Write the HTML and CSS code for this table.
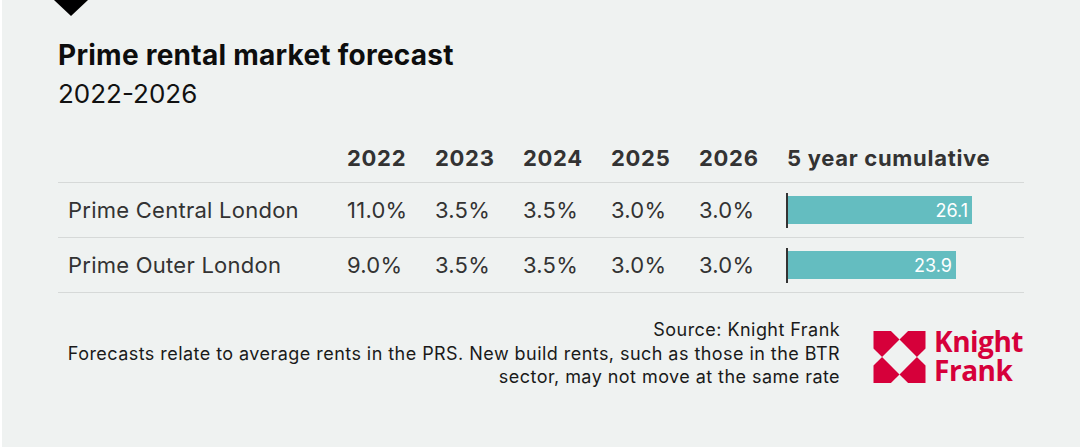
FILE: index.html
```html
<!DOCTYPE html>
<html lang="en">
<head>
<meta charset="utf-8">
<title>Prime rental market forecast</title>
<link rel="stylesheet" href="styles.css">
</head>
<body>
<div class="page">
  <div class="marker"></div>
  <h1 class="title">Prime rental market forecast</h1>
  <div class="subtitle">2022-2026</div>

  <div class="table">
    <div class="row head">
      <div class="cell label"></div>
      <div class="cell">2022</div>
      <div class="cell">2023</div>
      <div class="cell">2024</div>
      <div class="cell">2025</div>
      <div class="cell">2026</div>
      <div class="cell">5 year cumulative</div>
    </div>
    <div class="row">
      <div class="cell label">Prime Central London</div>
      <div class="cell">11.0%</div>
      <div class="cell">3.5%</div>
      <div class="cell">3.5%</div>
      <div class="cell">3.0%</div>
      <div class="cell">3.0%</div>
      <div class="cell barcell"><div class="bar" style="width:184px"><span>26.1</span></div></div>
    </div>
    <div class="row">
      <div class="cell label">Prime Outer London</div>
      <div class="cell">9.0%</div>
      <div class="cell">3.5%</div>
      <div class="cell">3.5%</div>
      <div class="cell">3.0%</div>
      <div class="cell">3.0%</div>
      <div class="cell barcell"><div class="bar" style="width:168px"><span>23.9</span></div></div>
    </div>
  </div>

  <div class="footer">
    <p class="note">Source: Knight Frank<br>Forecasts relate to average rents in the PRS. New build rents, such as those in the BTR<br>sector, may not move at the same rate</p>
    <div class="logo">
      <svg class="logo-mark" viewBox="0 0 100 100" width="53" height="52" aria-hidden="true">
        <polygon points="0,0 33.5,0 50,16.5 16.5,50 0,33.5" />
        <polygon points="66.5,0 100,0 100,33.5 83.5,50 50,16.5" />
        <polygon points="100,66.5 100,100 66.5,100 50,83.5 83.5,50" />
        <polygon points="0,66.5 16.5,50 50,83.5 33.5,100 0,100" />
      </svg>
      <div class="logo-text">Knight<br>Frank</div>
    </div>
  </div>
</div>
</body>
</html>
```

FILE: styles.css
```css
html, body {
  margin: 0;
  padding: 0;
  background: #ffffff;
}

.page {
  margin-left: 2px;
  height: 447px;
  background: #eff2f1;
  padding-left: 56px;
  padding-right: 56px;
  box-sizing: border-box;
  font-family: Inter, "Liberation Sans", sans-serif;
  color: #222;
  overflow: hidden;
}

.marker {
  width: 0;
  height: 0;
  margin-left: -4px;
  border-left: 17.5px solid transparent;
  border-right: 17.5px solid transparent;
  border-top: 16px solid #000;
}

.title {
  margin: 23px 0 0 0;
  font-size: 28px;
  line-height: 32px;
  font-weight: 700;
  color: #0d0d0d;
  letter-spacing: 0.25px;
}

.subtitle {
  margin-top: 8px;
  font-size: 26px;
  line-height: 30px;
  font-weight: 400;
  color: #111;
}

.table {
  margin-top: 37px;
  width: 966px;
}

.row {
  display: grid;
  grid-template-columns: 289px repeat(5, 88px) 1fr;
  align-items: center;
  height: 54px;
  border-bottom: 1px solid #d6d9d8;
  font-size: 22px;
  letter-spacing: 0.25px;
  color: #333;
}

.row.head {
  height: auto;
  align-items: end;
  padding-bottom: 12px;
  font-weight: 700;
  line-height: 24px;
  letter-spacing: 0.7px;
}

.cell {
  white-space: nowrap;
}

.label {
  padding-left: 10px;
}

.barcell {
  display: flex;
  align-items: center;
  height: 35px;
  border-left: 2px solid #333;
  margin-left: -1px;
}

.bar {
  height: 28px;
  background: #64bdc0;
  display: flex;
  align-items: center;
  justify-content: flex-end;
  box-sizing: border-box;
  padding-right: 4px;
}

.bar span {
  color: #fff;
  font-size: 18px;
  letter-spacing: 0;
}

.footer {
  display: flex;
  justify-content: flex-end;
  align-items: flex-start;
  gap: 33px;
  margin-top: 25px;
  padding-right: 1px;
}

.note {
  margin: 0;
  text-align: right;
  font-size: 18px;
  line-height: 23.5px;
  letter-spacing: 0.45px;
  color: #1a1a1a;
}

.logo {
  display: flex;
  align-items: flex-start;
  gap: 8px;
  margin-top: 13px;
}

.logo-mark {
  display: block;
  fill: #d6003a;
}

.logo-text {
  font-family: "Open Sans", "Liberation Sans", sans-serif;
  font-weight: 700;
  font-size: 28px;
  line-height: 29px;
  margin-top: -4px;
  color: #d6003a;
  letter-spacing: -0.5px;
}
```
